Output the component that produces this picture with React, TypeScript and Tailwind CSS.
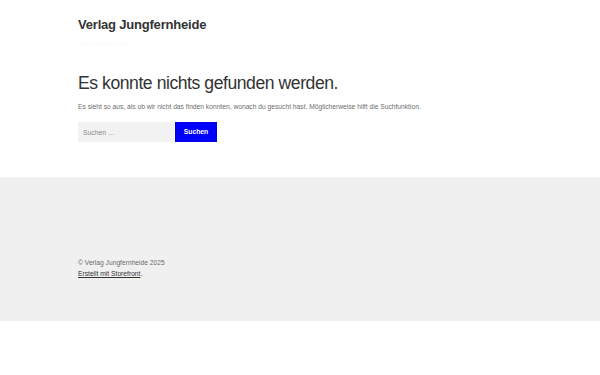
import React from 'react';

const App: React.FC = () => {
  return (
    <div className="min-h-[375px] bg-white font-['Liberation_Sans',Arial,sans-serif]">
      {/* Header */}
      <header className="mx-auto w-[444px] pt-[17px]">
        <div className="text-[13px] leading-[16px] font-bold tracking-[-0.2px] text-[#333333]">
          Verlag Jungfernheide
        </div>
        <div className="mt-[6px] text-[6px] leading-[8px] text-[#fafafa]">
          Zum Inhalt springen
        </div>
      </header>

      {/* Content */}
      <main className="mx-auto w-[444px] pt-[25px] pb-[35px]">
        <h1 className="text-[17.6px] leading-[22px] font-normal tracking-[-0.45px] text-[#333333]">
          Es konnte nichts gefunden werden.
        </h1>
        <p className="mt-[8px] text-[6.7px] leading-[10px] text-[#6d6d6d]">
          Es sieht so aus, als ob wir nicht das finden konnten, wonach du gesucht hast. Möglicherweise hilft die Suchfunktion.
        </p>
        <form className="mt-[10px] flex items-stretch" onSubmit={(e) => e.preventDefault()}>
          <input
            type="search"
            placeholder="Suchen …"
            className="h-[20px] w-[96px] bg-[#f2f2f2] px-[5px] text-[6.8px] text-[#6d6d6d] placeholder:text-[#8a8a8a] outline-none"
          />
          <button
            type="submit"
            className="ml-px h-[20px] w-[42px] border border-[#0000dd] bg-[#0000ff] text-[6.8px] font-bold text-white"
          >
            Suchen
          </button>
        </form>
      </main>

      {/* Footer */}
      <footer className="border-t border-[#f5f5f5] bg-[#f0f0f0] pt-[79px] pb-[42px]">
        <div className="mx-auto w-[444px] text-[6.7px] leading-[11px]">
          <div className="text-[#6d6d6d]">© Verlag Jungfernheide 2025</div>
          <div className="text-[#333333]">
            <a href="#" className="underline">Erstellt mit Storefront</a>.
          </div>
        </div>
      </footer>
    </div>
  );
};

export default App;
